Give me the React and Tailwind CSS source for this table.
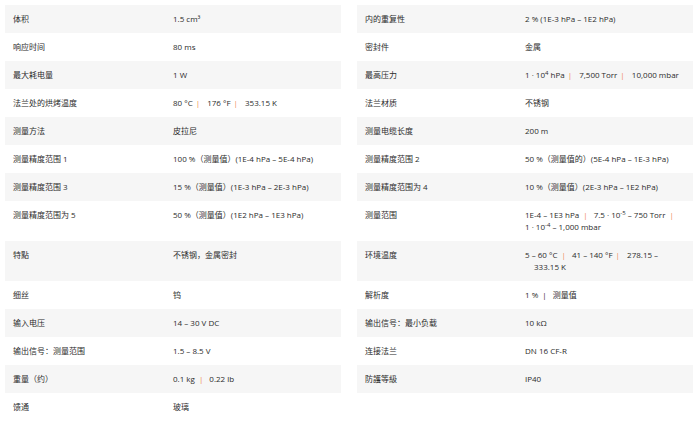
import React from "react";

const Sep = ({ plain, wide }) => (
    <span className={`${plain ? "text-[#333]" : "text-[#f0874f]"} ${wide ? "px-[4px]" : "pl-[3px] pr-[5px]"}`}>|</span>
);

const Sup = ({ children }) => <sup className="text-[6px]">{children}</sup>;

const rows = [
    [
        ["体积", <>1.5 cm³</>],
        ["内的重复性", <>2 % (1E-3 hPa – 1E2 hPa)</>],
    ],
    [
        ["响应时间", <>80 ms</>],
        ["密封件", <>金属</>],
    ],
    [
        ["最大耗电量", <>1 W</>],
        [
            "最高压力",
            <>
                1 · 10<Sup>4</Sup> hPa<Sep /> 7,500 Torr<Sep /> 10,000 mbar
            </>,
        ],
    ],
    [
        [
            "法兰处的烘烤温度",
            <>
                80 °C<Sep /> 176 °F<Sep /> 353.15 K
            </>,
        ],
        ["法兰材质", <>不锈钢</>],
    ],
    [
        ["测量方法", <>皮拉尼</>],
        ["测量电缆长度", <>200 m</>],
    ],
    [
        ["测量精度范围 1", <>100 %（测量值）(1E-4 hPa – 5E-4 hPa)</>],
        ["测量精度范围 2", <>50 %（测量值的）(5E-4 hPa – 1E-3 hPa)</>],
    ],
    [
        ["测量精度范围 3", <>15 %（测量值）(1E-3 hPa – 2E-3 hPa)</>],
        ["测量精度范围为 4", <>10 %（测量值）(2E-3 hPa – 1E2 hPa)</>],
    ],
    [
        ["测量精度范围为 5", <>50 %（测量值）(1E2 hPa – 1E3 hPa)</>],
        [
            "测量范围",
            <>
                1E-4 – 1E3 hPa<Sep wide /> 7.5 · 10<Sup>-5</Sup> – 750 Torr<Sep wide />
                <br />1 · 10<Sup>-4</Sup> – 1,000 mbar
            </>,
        ],
    ],
    [
        ["特點", <>不锈钢，金属密封</>],
        [
            "环境温度",
            <>
                5 – 60 °C<Sep wide /> 41 – 140 °F<Sep /> 278.15 –
                <br />
                <span className="pl-[9px]">333.15 K</span>
            </>,
        ],
    ],
    [
        ["细丝", <>钨</>],
        [
            "解析度",
            <>
                1 %<Sep plain wide /> 测量值
            </>,
        ],
    ],
    [
        ["输入电压", <>14 – 30 V DC</>],
        ["输出信号：最小负载", <>10 kΩ</>],
    ],
    [
        ["输出信号：测量范围", <>1.5 – 8.5 V</>],
        ["连接法兰", <>DN 16 CF-R</>],
    ],
    [
        [
            "重量（约）",
            <>
                0.1 kg<Sep wide /> 0.22 lb
            </>,
        ],
        ["防護等級", <>IP40</>],
    ],
    [["馈通", <>玻璃</>], null],
];

const Cell = ({ item, grey }) => {
    if (!item) return <div />;
    return (
        <div className={`grid grid-cols-[160px_1fr] ${grey ? "bg-[#f6f6f6]" : "bg-white"}`}>
            <div className="px-2 py-2">{item[0]}</div>
            <div className="px-2 py-2">{item[1]}</div>
        </div>
    );
};

export default function App() {
    return (
        <div
            className="w-[697px] h-[429px] bg-white text-[#2b2b2b] text-[8px] leading-[12px] overflow-hidden pt-[5px] pl-[5px] pr-[4px]"
            style={{ fontFamily: '"Open Sans", "Noto Sans CJK SC", sans-serif' }}
        >
            <div className="grid grid-cols-2 gap-x-4">
                {rows.map((r, i) => (
                    <React.Fragment key={i}>
                        <Cell item={r[0]} grey={i % 2 === 0} />
                        <Cell item={r[1]} grey={i % 2 === 0} />
                    </React.Fragment>
                ))}
            </div>
        </div>
    );
}
